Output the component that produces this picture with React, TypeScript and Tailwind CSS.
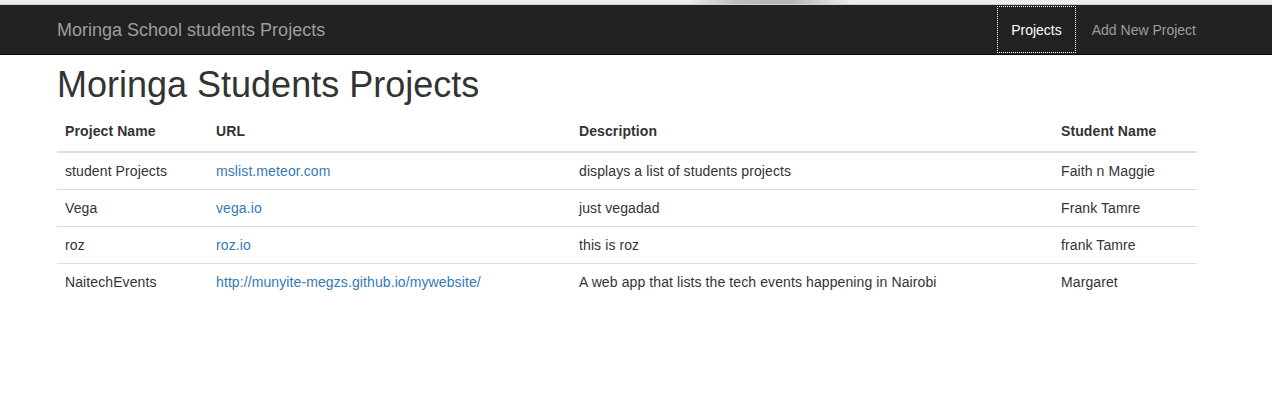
import React from "react";

const rows = [
  { name: "student Projects", url: "mslist.meteor.com", desc: "displays a list of students projects", student: "Faith n Maggie" },
  { name: "Vega", url: "vega.io", desc: "just vegadad", student: "Frank Tamre" },
  { name: "roz", url: "roz.io", desc: "this is roz", student: "frank Tamre" },
  { name: "NaitechEvents", url: "http://munyite-megzs.github.io/mywebsite/", desc: "A web app that lists the tech events happening in Nairobi", student: "Margaret" },
];

export default function App() {
  return (
    <div className="min-h-[415px] bg-white text-[#333] text-[14px] leading-5 tracking-[0.1px]" style={{ fontFamily: '"Liberation Sans", Arial, sans-serif' }}>
      <div className="h-[5px] border-b border-[#cfcfcf] bg-[linear-gradient(90deg,#ececec_0%,#ececec_54%,#bdbdbd_58%,#b4b4b4_62%,#d8d8d8_65%,#ececec_67%,#ececec_100%)]" />
      <nav className="h-[50px] bg-[#222] border-b border-[#080808]">
        <div className="ml-[57px] w-[1140px] h-full flex justify-between items-stretch">
          <a className="flex items-center text-[18px] leading-5 tracking-normal text-[#9d9d9d]">Moringa School students Projects</a>
          <ul className="flex mr-[-14px] items-stretch tracking-normal">
            <li className="flex">
              <a className="flex items-center px-[15px] text-white outline-1 outline-dotted outline-white -outline-offset-2">Projects</a>
            </li>
            <li className="flex">
              <a className="flex items-center px-[15px] text-[#9d9d9d]">Add New Project</a>
            </li>
          </ul>
        </div>
      </nav>
      <div className="ml-[57px] w-[1140px]">
        <h1 className="mt-[10px] mb-[10px] text-[36px] leading-[1.1] font-normal tracking-normal text-[#333]">Moringa Students Projects</h1>
        <table className="w-full border-collapse">
          <colgroup>
            <col className="w-[151px]" />
            <col className="w-[363px]" />
            <col className="w-[482px]" />
            <col className="w-[144px]" />
          </colgroup>
          <thead>
            <tr>
              {["Project Name", "URL", "Description", "Student Name"].map((h) => (
                <th key={h} className="text-left font-bold px-2 pt-[6px] pb-[10px] border-b-2 border-[#ddd] align-bottom">{h}</th>
              ))}
            </tr>
          </thead>
          <tbody>
            {rows.map((r) => (
              <tr key={r.name}>
                <td className="p-2 border-t border-[#ddd]">{r.name}</td>
                <td className="p-2 border-t border-[#ddd]"><a className="text-[#337ab7]">{r.url}</a></td>
                <td className="p-2 border-t border-[#ddd]">{r.desc}</td>
                <td className="p-2 border-t border-[#ddd]">{r.student}</td>
              </tr>
            ))}
          </tbody>
        </table>
      </div>
    </div>
  );
}
